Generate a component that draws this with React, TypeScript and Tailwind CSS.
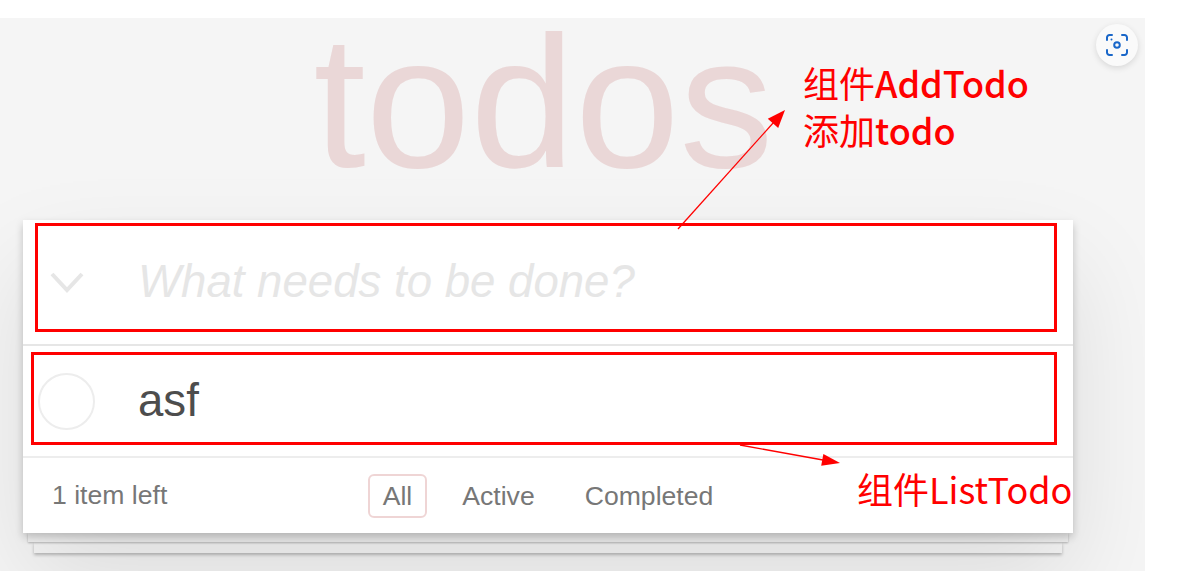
import React from "react";

const filters = ["All", "Active", "Completed"];

function LensIcon() {
  return (
    <svg width="22" height="22" viewBox="0 0 22 22" fill="none" stroke="#1a67c9" strokeWidth="2" strokeLinecap="round">
      <path d="M1 6V3.5A2.5 2.5 0 0 1 3.5 1H6" />
      <path d="M16 1h2.5A2.5 2.5 0 0 1 21 3.5V6" />
      <path d="M21 16v2.5a2.5 2.5 0 0 1-2.5 2.5H16" />
      <path d="M6 21H3.5A2.5 2.5 0 0 1 1 18.5V16" />
      <circle cx="11" cy="11" r="2.8" />
      <circle cx="5.5" cy="5.5" r="1" fill="#1a67c9" stroke="none" />
    </svg>
  );
}

export default function App() {
  return (
    <div className="relative h-[583px] w-full overflow-hidden bg-white pt-[18px] font-['Liberation_Sans',Arial,sans-serif]">
      {/* page area */}
      <div className="h-[553px] w-[1145px] overflow-hidden bg-[#f5f5f5]">
        <div className="ml-[23px] w-[1050px]">
          <h1 className="h-[202px] pr-[9px] text-center text-[188px] font-normal leading-[168px] text-[#ead7d7]">
            todos
          </h1>

          <section className="relative z-10 bg-white shadow-[0_4px_8px_0_rgba(0,0,0,0.2),0_47px_95px_0_rgba(0,0,0,0.1)]">
            {/* new todo */}
            <div className="flex h-[124px] items-center">
              <div className="flex w-[115px] pl-[27px]">
                <svg width="34" height="21" viewBox="0 0 34 21" fill="none" stroke="#e6e6e6" strokeWidth="4">
                  <polyline points="2,2 17,18 32,2" />
                </svg>
              </div>
              <span className="text-[45.6px] italic leading-none text-[#e6e6e6]">What needs to be done?</span>
            </div>

            {/* list */}
            <ul className="border-t-2 border-[#e6e6e6]">
              <li className="flex h-[112px] items-center border-b-2 border-[#ededed] pl-[15px]">
                <span className="h-[57px] w-[57px] rounded-full border-2 border-[#ededed]" />
                <span className="ml-[43px] text-[45.6px] text-[#4d4d4d]">asf</span>
              </li>
            </ul>

            {/* footer */}
            <footer className="grid h-[75px] grid-cols-[1fr_auto_1fr] items-center px-[29px] text-[26.6px] text-[#777777]">
              <span>1 item left</span>
              <ul className="flex items-center gap-[20px]">
                {filters.map((f, i) => (
                  <li
                    key={f}
                    className={
                      i === 0
                        ? "rounded-[6px] border-2 border-[rgba(175,47,47,0.2)] px-[13px] py-[5px] leading-[30px]"
                        : "rounded-[6px] border-2 border-transparent px-[13px] py-[5px] leading-[30px]"
                    }
                  >
                    {f}
                  </li>
                ))}
              </ul>
              <span />
            </footer>
          </section>

          {/* stacked papers */}
          <div className="relative z-[5] mx-[5px] h-[9px] bg-[#f6f6f6] shadow-[0_1px_2px_0_rgba(0,0,0,0.25)]" />
          <div className="relative z-[4] mx-[11px] h-[11px] bg-[#f6f6f6] shadow-[0_2px_3px_0_rgba(0,0,0,0.25)]" />
        </div>
      </div>

      {/* floating button */}
      <button className="absolute left-[1096px] top-[24px] z-20 flex h-[42px] w-[42px] items-center justify-center rounded-full bg-[#fafafa] shadow-[0_2px_6px_rgba(0,0,0,0.12)]">
        <LensIcon />
      </button>

      {/* annotations */}
      <div className="pointer-events-none absolute left-[35px] top-[223px] z-20 h-[109px] w-[1022px] border-[3px] border-[#ff0000]" />
      <div className="pointer-events-none absolute left-[31px] top-[352px] z-20 h-[93px] w-[1026px] border-[3px] border-[#ff0000]" />

      <svg className="pointer-events-none absolute left-0 top-0 z-20" width="1191" height="583">
        <line x1="678" y1="229" x2="774" y2="122" stroke="#ff0000" strokeWidth="1.3" />
        <polygon points="785,110 778.2,128.1 767.8,118.7" fill="#ff0000" />
        <line x1="740" y1="445" x2="823" y2="460" stroke="#ff0000" strokeWidth="1.3" />
        <polygon points="840,463 821.2,465.7 823.4,453.9" fill="#ff0000" />
      </svg>

      <div className="absolute left-[803px] top-[59px] z-20 font-['Noto_Sans_CJK_SC',sans-serif] text-[36px] leading-[47px] text-[#ff0000]">
        <div>
          组件<span className="font-medium">AddTodo</span>
        </div>
        <div>
          添加<span className="font-medium">todo</span>
        </div>
      </div>
      <div className="absolute left-[857px] top-[465px] z-20 whitespace-nowrap font-['Noto_Sans_CJK_SC',sans-serif] text-[36px] leading-[47px] text-[#ff0000]">
        组件ListTodo
      </div>
    </div>
  );
}
